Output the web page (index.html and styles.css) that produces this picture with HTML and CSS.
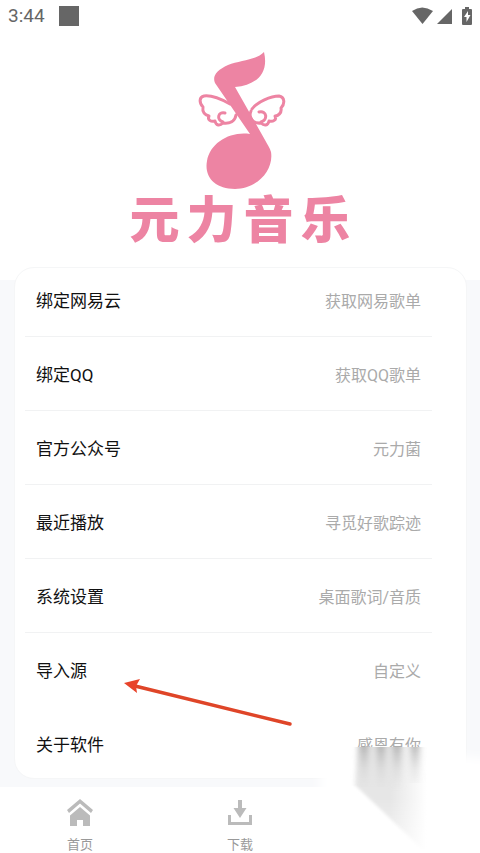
FILE: index.html
```html
<!DOCTYPE html>
<html lang="zh-CN">
<head>
  <meta charset="UTF-8">
  <meta name="viewport" content="width=device-width, initial-scale=1.0">
  <title>元力音乐</title>
  <link rel="stylesheet" href="styles.css">
</head>
<body>
  <div class="page">
    <header class="hero">
      <div class="status-bar">
        <span class="time">3:44</span>
        <span class="square"></span>
        <svg class="status-icons" width="62" height="20" viewBox="0 0 62 20" fill="#666">
          <path d="M0 5Q10-2 21 5L10.500 18Z"/>
          <path d="M40 3V18H25Z"/>
          <path d="M53 1h4v2h2q1 0 1 1v14q0 1-1 1h-8q-1 0-1-1V4q0-1 1-1h2Z"/>
          <path d="M56 5l-4 6h2.500v5l4-7H56Z" fill="#fff"/>
        </svg>
      </div>

      <svg class="logo" width="92" height="140" viewBox="-3 0 92 140">
        <path fill="#ed84a3" d="M67 1C60 9 43 9 31 14C20 19 15 25 18 32L53 83C33 80 13 92 10 110C7 126 18 138 38 138C60 138 77 119 74 101C73 97 70 93 68 89L38 36C60 34 72 22 67 1Z"/>
        <g fill="none" stroke="#ed84a3" stroke-width="3" stroke-linecap="round" stroke-linejoin="round">
          <path d="M33 53C24 48 15 44 7 45C2 46 2 52 6 56C5 61 8 64 12 65C10 69 14 71 18 70C19 75 23 75 26 72C33 73 38 70 39 64M26 71C19 69 21 60 28 62"/>
          <path d="M55 58C60 51 74 45 82 45C88 46 88 53 84 57C85 62 81 65 78 65C80 69 76 71 72 70C71 75 67 75 64 72C56 73 51 67 54 60M64 71C71 69 70 59 62 61"/>
        </g>
      </svg>
      <h1 class="wordmark"><span>元</span><span>力</span><span>音</span><span>乐</span></h1>
    </header>

    <main class="card">
      <ul class="menu">
        <li><a href="#netease"><span class="label">绑定网易云</span><span class="value">获取网易歌单</span></a></li>
        <li><a href="#qq"><span class="label">绑定QQ</span><span class="value">获取QQ歌单</span></a></li>
        <li><a href="#official"><span class="label">官方公众号</span><span class="value">元力菌</span></a></li>
        <li><a href="#recent"><span class="label">最近播放</span><span class="value">寻觅好歌踪迹</span></a></li>
        <li><a href="#settings"><span class="label">系统设置</span><span class="value">桌面歌词/音质</span></a></li>
        <li class="plain"><a href="#source"><span class="label">导入源</span><span class="value">自定义</span></a></li>
        <li class="plain"><a href="#about"><span class="label">关于软件</span><span class="value">感恩有你</span></a></li>
      </ul>

      <!-- arrow pointing at the import row -->
      <svg class="arrow" width="170" height="52" viewBox="0 0 170 52">
        <path d="M12 8L167 46" stroke="#df4528" stroke-width="3.400" stroke-linecap="round"/>
        <path d="M1 5L17 1L13 8L14 15Z" fill="#e8432a"/>
      </svg>
    </main>

    <nav class="tabs">
      <a href="#home">
        <svg width="28" height="28" viewBox="0 0 28 28" fill="#bbb">
          <path d="M14 0L27 11L25 14L14 4.500L3 14L1 11Z"/>
          <path d="M14 8L24 16.500V27H17V21H11V27H4V16.500Z"/>
        </svg>
        <span>首页</span>
      </a>
      <a href="#download">
        <svg width="28" height="28" viewBox="0 0 28 28" fill="#bbb">
          <path d="M12 1h4v8h4.500L14 19L7.500 9H12Z"/>
          <path d="M2 16h3v7h18v-7h3v10H2Z"/>
        </svg>
        <span>下载</span>
      </a>
    </nav>

    <!-- smeared patch over the bottom right corner -->
    <svg class="smear" width="180" height="113" viewBox="0 0 180 113">
      <defs>
        <filter id="soft" x="-20%" y="-20%" width="140%" height="140%"><feGaussianBlur stdDeviation="5"/></filter>
        <filter id="edge" x="-10%" y="-10%" width="120%" height="120%"><feGaussianBlur stdDeviation="2 0"/></filter>
        <filter id="streak" x="-20%" y="-20%" width="140%" height="140%"><feGaussianBlur stdDeviation="3 0"/></filter>
        <linearGradient id="fall" x1="0" y1="0" x2="0" y2="1">
          <stop offset="0" stop-color="#e6e6e6"/>
          <stop offset="0.5" stop-color="#e6e6e6"/>
          <stop offset="1" stop-color="#f4f4f4"/>
        </linearGradient>
        <linearGradient id="side" x1="0" y1="0" x2="1" y2="0">
          <stop offset="0.5" stop-color="#fff" stop-opacity="0"/>
          <stop offset="0.95" stop-color="#fff"/>
        </linearGradient>
        <linearGradient id="drip" x1="0" y1="0" x2="0" y2="1">
          <stop offset="0" stop-color="#999" stop-opacity="0.7"/>
          <stop offset="0.5" stop-color="#bbb" stop-opacity="0.3"/>
          <stop offset="1" stop-color="#ccc" stop-opacity="0"/>
        </linearGradient>
      </defs>
      <path d="M20 28L50 14H155L190 18V130H20Z" fill="#fff" filter="url(#soft)"/>
      <path d="M50 6H128V60H50Z" fill="#fff"/>
      <path d="M57 6H126V110L120 106L55 44Z" fill="url(#fall)" filter="url(#edge)"/>
      <path d="M50 6H131V113H50Z" fill="url(#side)"/>
      <path d="M60 6h8v40h-8ZM77 6h8v40h-8ZM93 6h8v44h-8ZM111 6h8v36h-8Z" fill="url(#drip)" filter="url(#streak)"/>
    </svg>
  </div>
</body>
</html>
```
FILE: styles.css
```css
* {
  box-sizing: border-box;
}

body {
  margin: 0;
  background: #f8f9fb;
  color: #111;
  font-family: Roboto, "Noto Sans CJK SC", sans-serif;
}

a {
  color: inherit;
  text-decoration: none;
}

.page {
  position: relative;
  display: flex;
  flex-direction: column;
  min-height: 100vh;
  overflow: hidden;
}

.hero {
  display: flex;
  flex-direction: column;
  align-items: center;
  padding-bottom: 30px;
  background: #fff;
}

.status-bar {
  display: flex;
  align-items: center;
  align-self: stretch;
  gap: 14px;
  height: 32px;
  padding: 0 6px 0 8px;
  color: #666;
}

.time {
  font-size: 19px;
  line-height: 32px;
}

.square {
  width: 20px;
  height: 20px;
  background: #666;
}

.status-icons {
  margin-left: auto;
}

.logo {
  margin-top: 19px;
}

.wordmark {
  display: flex;
  gap: 7px;
  margin: 2px 0 0;
  color: #ed84a3;
  font-size: 50px;
  font-weight: 900;
  line-height: 57px;
}

.card {
  position: relative;
  margin: -13px 13px 8px 14px;
  padding: 0 34px 1px 10px;
  background: #fff;
  border: 1px solid #f5f6f7;
  border-radius: 20px;
}

.menu {
  list-style: none;
  margin: -5px 0 -4px;
  padding: 0;
}

.menu li {
  border-bottom: 1px solid #f1f2f3;
}

.menu .plain {
  border-color: transparent;
}

.menu a {
  display: flex;
  align-items: center;
  justify-content: space-between;
  height: 73px;
  padding: 0 11px;
}

.label {
  font-size: 17px;
}

.value {
  color: #aaa;
  font-size: 16px;
}

.arrow {
  position: absolute;
  left: 108px;
  bottom: 48px;
}

.tabs {
  flex: 1;
  display: grid;
  grid-template-columns: repeat(3, 1fr);
  background: #fff;
}

.tabs a {
  display: flex;
  flex-direction: column;
  align-items: center;
  gap: 8px;
  padding-top: 12px;
  color: #999;
  font-size: 13px;
  line-height: 19px;
}

.smear {
  position: absolute;
  right: 0;
  bottom: 0;
}
```
